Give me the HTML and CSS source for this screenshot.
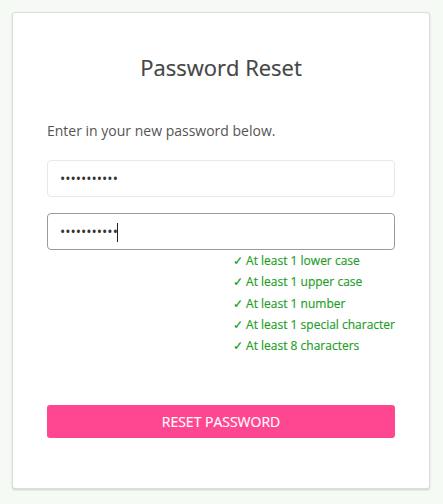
FILE: index.html
```html
<!DOCTYPE html>
<html lang="en">
<head>
<meta charset="utf-8">
<title>Password Reset</title>
<link rel="stylesheet" href="styles.css">
</head>
<body>
<div class="card">
  <h1 class="title">Password Reset</h1>
  <p class="intro">Enter in your new password below.</p>
  <input class="field" type="password" value="abcdefghijk">
  <div class="field-wrap">
    <input class="field field-active" type="password" value="abcdefghijk">
    <span class="caret"></span>
  </div>
  <div class="rules-row">
    <ul class="rules">
      <li>✓ At least 1 lower case</li>
      <li>✓ At least 1 upper case</li>
      <li>✓ At least 1 number</li>
      <li>✓ At least 1 special character</li>
      <li>✓ At least 8 characters</li>
    </ul>
  </div>
  <button class="btn" type="button">RESET PASSWORD</button>
</div>
</body>
</html>
```
FILE: styles.css
```css
html, body {
  margin: 0;
  padding: 0;
  background: #f6faf5;
  font-family: "Open Sans", "Liberation Sans", sans-serif;
}
body {
  padding: 12px 13px 15px 12px;
}
.card {
  box-sizing: border-box;
  width: 418px;
  height: 477px;
  background: #fff;
  border: 1px solid #dcdedc;
  border-radius: 3px;
  box-shadow: 0 1px 2px rgba(0,0,0,0.18);
  padding: 39px 34px 0 34px;
  display: flex;
  flex-direction: column;
}
.title {
  margin: 0;
  font-size: 22px;
  font-weight: 400;
  line-height: 30px;
  color: #454545;
  text-align: center;
  -webkit-text-stroke: 0.2px #454545;
}
.intro {
  margin: 39px 0 0 0;
  font-size: 14px;
  line-height: 20px;
  color: #555;
}
.field {
  box-sizing: border-box;
  width: 348px;
  height: 37px;
  margin-top: 19px;
  border: 1px solid #e8e8e8;
  border-radius: 4px;
  padding: 0 12px;
  font-family: "Open Sans", "Liberation Sans", sans-serif;
  font-size: 14px;
  color: #333;
  outline: none;
  background: #fff;
}
.field-wrap {
  display: flex;
  position: relative;
}
.field-active {
  margin-top: 16px;
  border-color: #9a9a9a;
}
.caret {
  position: absolute;
  left: 70px;
  top: 26px;
  width: 1px;
  height: 19px;
  background: #222;
}
.rules-row {
  display: flex;
  justify-content: flex-end;
}
.rules {
  list-style: none;
  margin: 0;
  padding: 0;
  font-size: 12px;
  line-height: 21.3px;
  color: #1b9d25;
  -webkit-text-stroke: 0.15px #1b9d25;
}
.btn {
  margin-top: 49px;
  width: 348px;
  height: 33px;
  border: none;
  border-radius: 3px;
  background: #ff4690;
  color: #fff;
  font-family: "Open Sans", "Liberation Sans", sans-serif;
  font-size: 14px;
  padding: 0;
  -webkit-text-stroke: 0.15px #fff;
}
```
